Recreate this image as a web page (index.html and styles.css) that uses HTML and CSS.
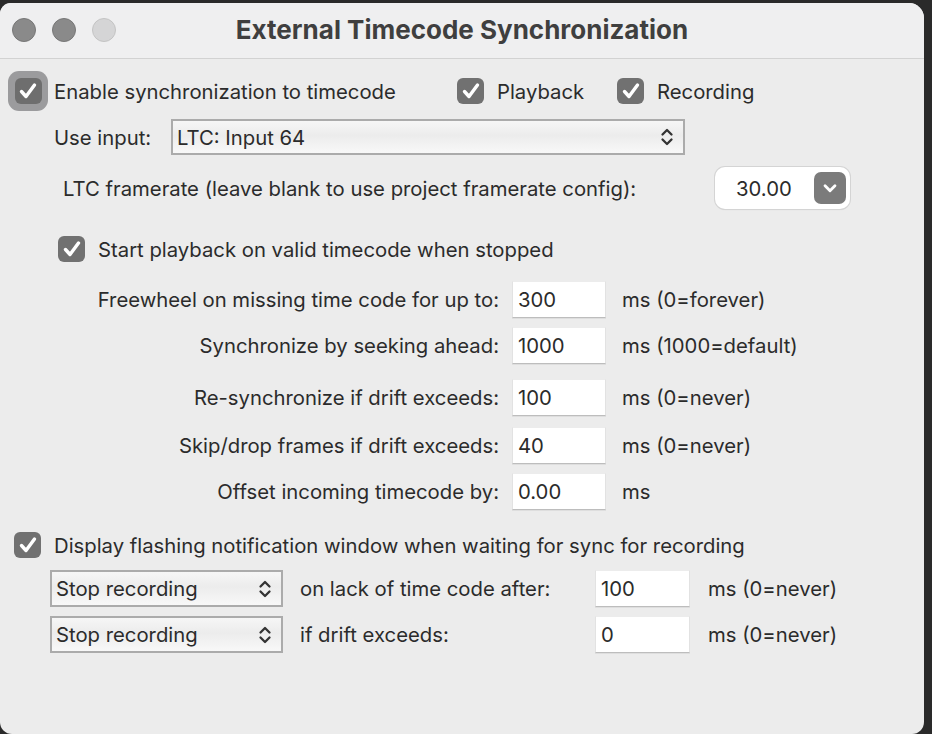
FILE: index.html
```html
<!DOCTYPE html>
<html>
<head>
<meta charset="utf-8">
<link rel="stylesheet" href="styles.css">
</head>
<body>
<div class="window">
  <div class="titlebar">
    <div class="lights">
      <span class="light"></span>
      <span class="light"></span>
      <span class="light off"></span>
    </div>
    <div class="title">External Timecode Synchronization</div>
    <div></div>
  </div>
  <div class="content">
    <div class="row r1">
      <div class="grp g-enable">
        <span class="focus"><span class="cb"><svg viewBox="0 0 26 26"><path d="M6.5 13.5 L11 18.5 L19.5 7" /></svg></span></span>
        <span class="lbl">Enable synchronization to timecode</span>
      </div>
      <div class="grp g-play">
        <span class="cb"><svg viewBox="0 0 26 26"><path d="M6.5 13.5 L11 18.5 L19.5 7" /></svg></span>
        <span class="lbl">Playback</span>
      </div>
      <div class="grp">
        <span class="cb"><svg viewBox="0 0 26 26"><path d="M6.5 13.5 L11 18.5 L19.5 7" /></svg></span>
        <span class="lbl">Recording</span>
      </div>
    </div>

    <div class="row r2">
      <span class="lbl use">Use input:</span>
      <div class="select wide">
        <span>LTC: Input 64</span>
        <svg class="chev" viewBox="0 0 14 20"><path d="M2.5 7.5 L7 3 L11.5 7.5 M2.5 12.5 L7 17 L11.5 12.5"/></svg>
      </div>
    </div>

    <div class="row r3">
      <span class="lbl ltc">LTC framerate (leave blank to use project framerate config):</span>
      <div class="combo">
        <span class="val">30.00</span>
        <span class="dd"><svg viewBox="0 0 14 10"><path d="M2.5 2.5 L7 7 L11.5 2.5"/></svg></span>
      </div>
    </div>

    <div class="row r4">
      <span class="cb"><svg viewBox="0 0 26 26"><path d="M6.5 13.5 L11 18.5 L19.5 7" /></svg></span>
      <span class="lbl">Start playback on valid timecode when stopped</span>
    </div>

    <div class="params">
      <div class="prow p1">
        <span class="plbl">Freewheel on missing time code for up to:</span>
        <div class="field">300</div>
        <span class="unit">ms (0=forever)</span>
      </div>
      <div class="prow p2">
        <span class="plbl">Synchronize by seeking ahead:</span>
        <div class="field">1000</div>
        <span class="unit">ms (1000=default)</span>
      </div>
      <div class="prow p3">
        <span class="plbl">Re-synchronize if drift exceeds:</span>
        <div class="field">100</div>
        <span class="unit">ms (0=never)</span>
      </div>
      <div class="prow p4">
        <span class="plbl">Skip/drop frames if drift exceeds:</span>
        <div class="field">40</div>
        <span class="unit">ms (0=never)</span>
      </div>
      <div class="prow p5">
        <span class="plbl">Offset incoming timecode by:</span>
        <div class="field">0.00</div>
        <span class="unit">ms</span>
      </div>
    </div>

    <div class="row r10">
      <span class="cb"><svg viewBox="0 0 26 26"><path d="M6.5 13.5 L11 18.5 L19.5 7" /></svg></span>
      <span class="lbl">Display flashing notification window when waiting for sync for recording</span>
    </div>

    <div class="srow s1">
      <div class="select small">
        <span>Stop recording</span>
        <svg class="chev" viewBox="0 0 14 20"><path d="M2.5 7.5 L7 3 L11.5 7.5 M2.5 12.5 L7 17 L11.5 12.5"/></svg>
      </div>
      <span class="slbl">on lack of time code after:</span>
      <div class="field sf">100</div>
      <span class="unit">ms (0=never)</span>
    </div>
    <div class="srow s2">
      <div class="select small">
        <span>Stop recording</span>
        <svg class="chev" viewBox="0 0 14 20"><path d="M2.5 7.5 L7 3 L11.5 7.5 M2.5 12.5 L7 17 L11.5 12.5"/></svg>
      </div>
      <span class="slbl">if drift exceeds:</span>
      <div class="field sf">0</div>
      <span class="unit">ms (0=never)</span>
    </div>
  </div>
</div>
</body>
</html>
```

FILE: styles.css
```css
* { box-sizing: border-box; }
html, body {
  margin: 0;
  padding: 0;
  background: #2a2a2a;
  height: 734px;
  overflow: hidden;
}
body {
  font-family: Inter, "Noto Sans", "Liberation Sans", sans-serif;
  font-size: 20.3px;
  color: #2b2b2b;
}
.window {
  margin-top: 3px;
  width: 924px;
  height: 731px;
  background: #ececec;
  border-radius: 11px 15px 12px 12px;
  overflow: hidden;
}
.titlebar {
  height: 56px;
  background: #efeff0;
  border-bottom: 1px solid #d2d2d2;
  display: grid;
  grid-template-columns: 1fr auto 1fr;
  align-items: center;
}
.lights {
  display: flex;
  gap: 16px;
  padding-left: 12px;
  padding-bottom: 1px;
}
.light {
  width: 24px;
  height: 24px;
  border-radius: 50%;
  background: #8a8a8a;
  border: 1px solid #777;
}
.light.off {
  background: #d5d5d6;
  border-color: #c4c4c4;
}
.title {
  font-weight: 700;
  font-size: 26px;
  color: #3f3f3f;
  padding-bottom: 2px;
}
.row {
  display: flex;
  align-items: center;
}
.lbl { white-space: nowrap; }
.cb {
  width: 27px;
  height: 26px;
  border-radius: 6px;
  background: #717171;
  display: inline-flex;
  align-items: center;
  justify-content: center;
  flex: none;
}
.cb svg {
  width: 26px;
  height: 26px;
  fill: none;
  stroke: #fff;
  stroke-width: 3.4;
  stroke-linecap: round;
  stroke-linejoin: round;
}
.focus {
  width: 40px;
  height: 40px;
  border-radius: 11px;
  background: #9b9b9d;
  display: inline-flex;
  align-items: center;
  justify-content: center;
  flex: none;
}
.focus .cb { background: #6e6e6e; }
.grp {
  display: flex;
  align-items: center;
  gap: 13px;
}
.r1 {
  margin-top: 12px;
  height: 40px;
  padding-left: 8px;
}
.g-enable { width: 449px; gap: 6px; }
.g-play { width: 160px; }
.r2 {
  margin-top: 8px;
  height: 36px;
  padding-left: 54px;
}
.use { width: 117px; }
.select {
  height: 36px;
  border: 2px solid #ababab;
  background: linear-gradient(#f6f6f6, #ececec 45%, #f8f8f8);
  display: flex;
  align-items: center;
  justify-content: space-between;
  padding: 0 9px 0 4px;
}
.select.wide { width: 514px; }
.chev {
  width: 14px;
  height: 20px;
  fill: none;
  stroke: #333;
  stroke-width: 2.3;
  stroke-linecap: round;
  stroke-linejoin: round;
}
.r3 {
  margin-top: 12px;
  height: 42px;
  padding-left: 63px;
}
.ltc { width: 652px; }
.combo {
  width: 135px;
  height: 42px;
  background: #fff;
  border-radius: 10px;
  box-shadow: 0 0 0 1px #d4d4d4, 0 1px 1px rgba(0,0,0,0.12);
  display: flex;
  align-items: center;
  justify-content: space-between;
  padding: 0 4px 0 21px;
}
.dd {
  width: 32px;
  height: 32px;
  border-radius: 7px;
  background: #7b7b7b;
  display: flex;
  align-items: center;
  justify-content: center;
}
.dd svg {
  width: 16px;
  height: 11px;
  fill: none;
  stroke: #fff;
  stroke-width: 2.6;
  stroke-linecap: round;
  stroke-linejoin: round;
}
.r4 {
  margin-top: 27px;
  height: 26px;
  padding-left: 58px;
  gap: 13px;
}
.params { margin-top: 19px; }
.prow {
  display: grid;
  grid-template-columns: 499px 94px auto;
  align-items: center;
  height: 37px;
}
.plbl {
  text-align: right;
  white-space: nowrap;
}
.prow .field { margin-left: 13px; }
.prow .unit { margin-left: 29px; }
.p2 { margin-top: 9px; }
.p3 { margin-top: 15px; }
.p4 { margin-top: 11px; }
.p5 { margin-top: 9px; }
.field {
  width: 94px;
  height: 37px;
  background: #fff;
  border: 1px solid #e2e2e2;
  border-bottom: 1px solid #bdbdbd;
  border-top-color: #ececec;
  box-shadow: 0 1px 0 rgba(0,0,0,0.06);
  display: flex;
  align-items: center;
  padding-left: 5px;
}
.unit { white-space: nowrap; }
.r10 {
  margin-top: 22px;
  height: 26px;
  padding-left: 14px;
  gap: 13px;
}
.srow {
  display: flex;
  align-items: center;
  height: 37px;
  padding-left: 50px;
}
.s1 { margin-top: 12px; }
.s2 { margin-top: 9px; }
.select.small {
  width: 233px;
  height: 37px;
}
.slbl {
  width: 312px;
  padding-left: 17px;
  white-space: nowrap;
}
.field.sf { width: 95px; }
.srow .unit { margin-left: 18px; }
```
